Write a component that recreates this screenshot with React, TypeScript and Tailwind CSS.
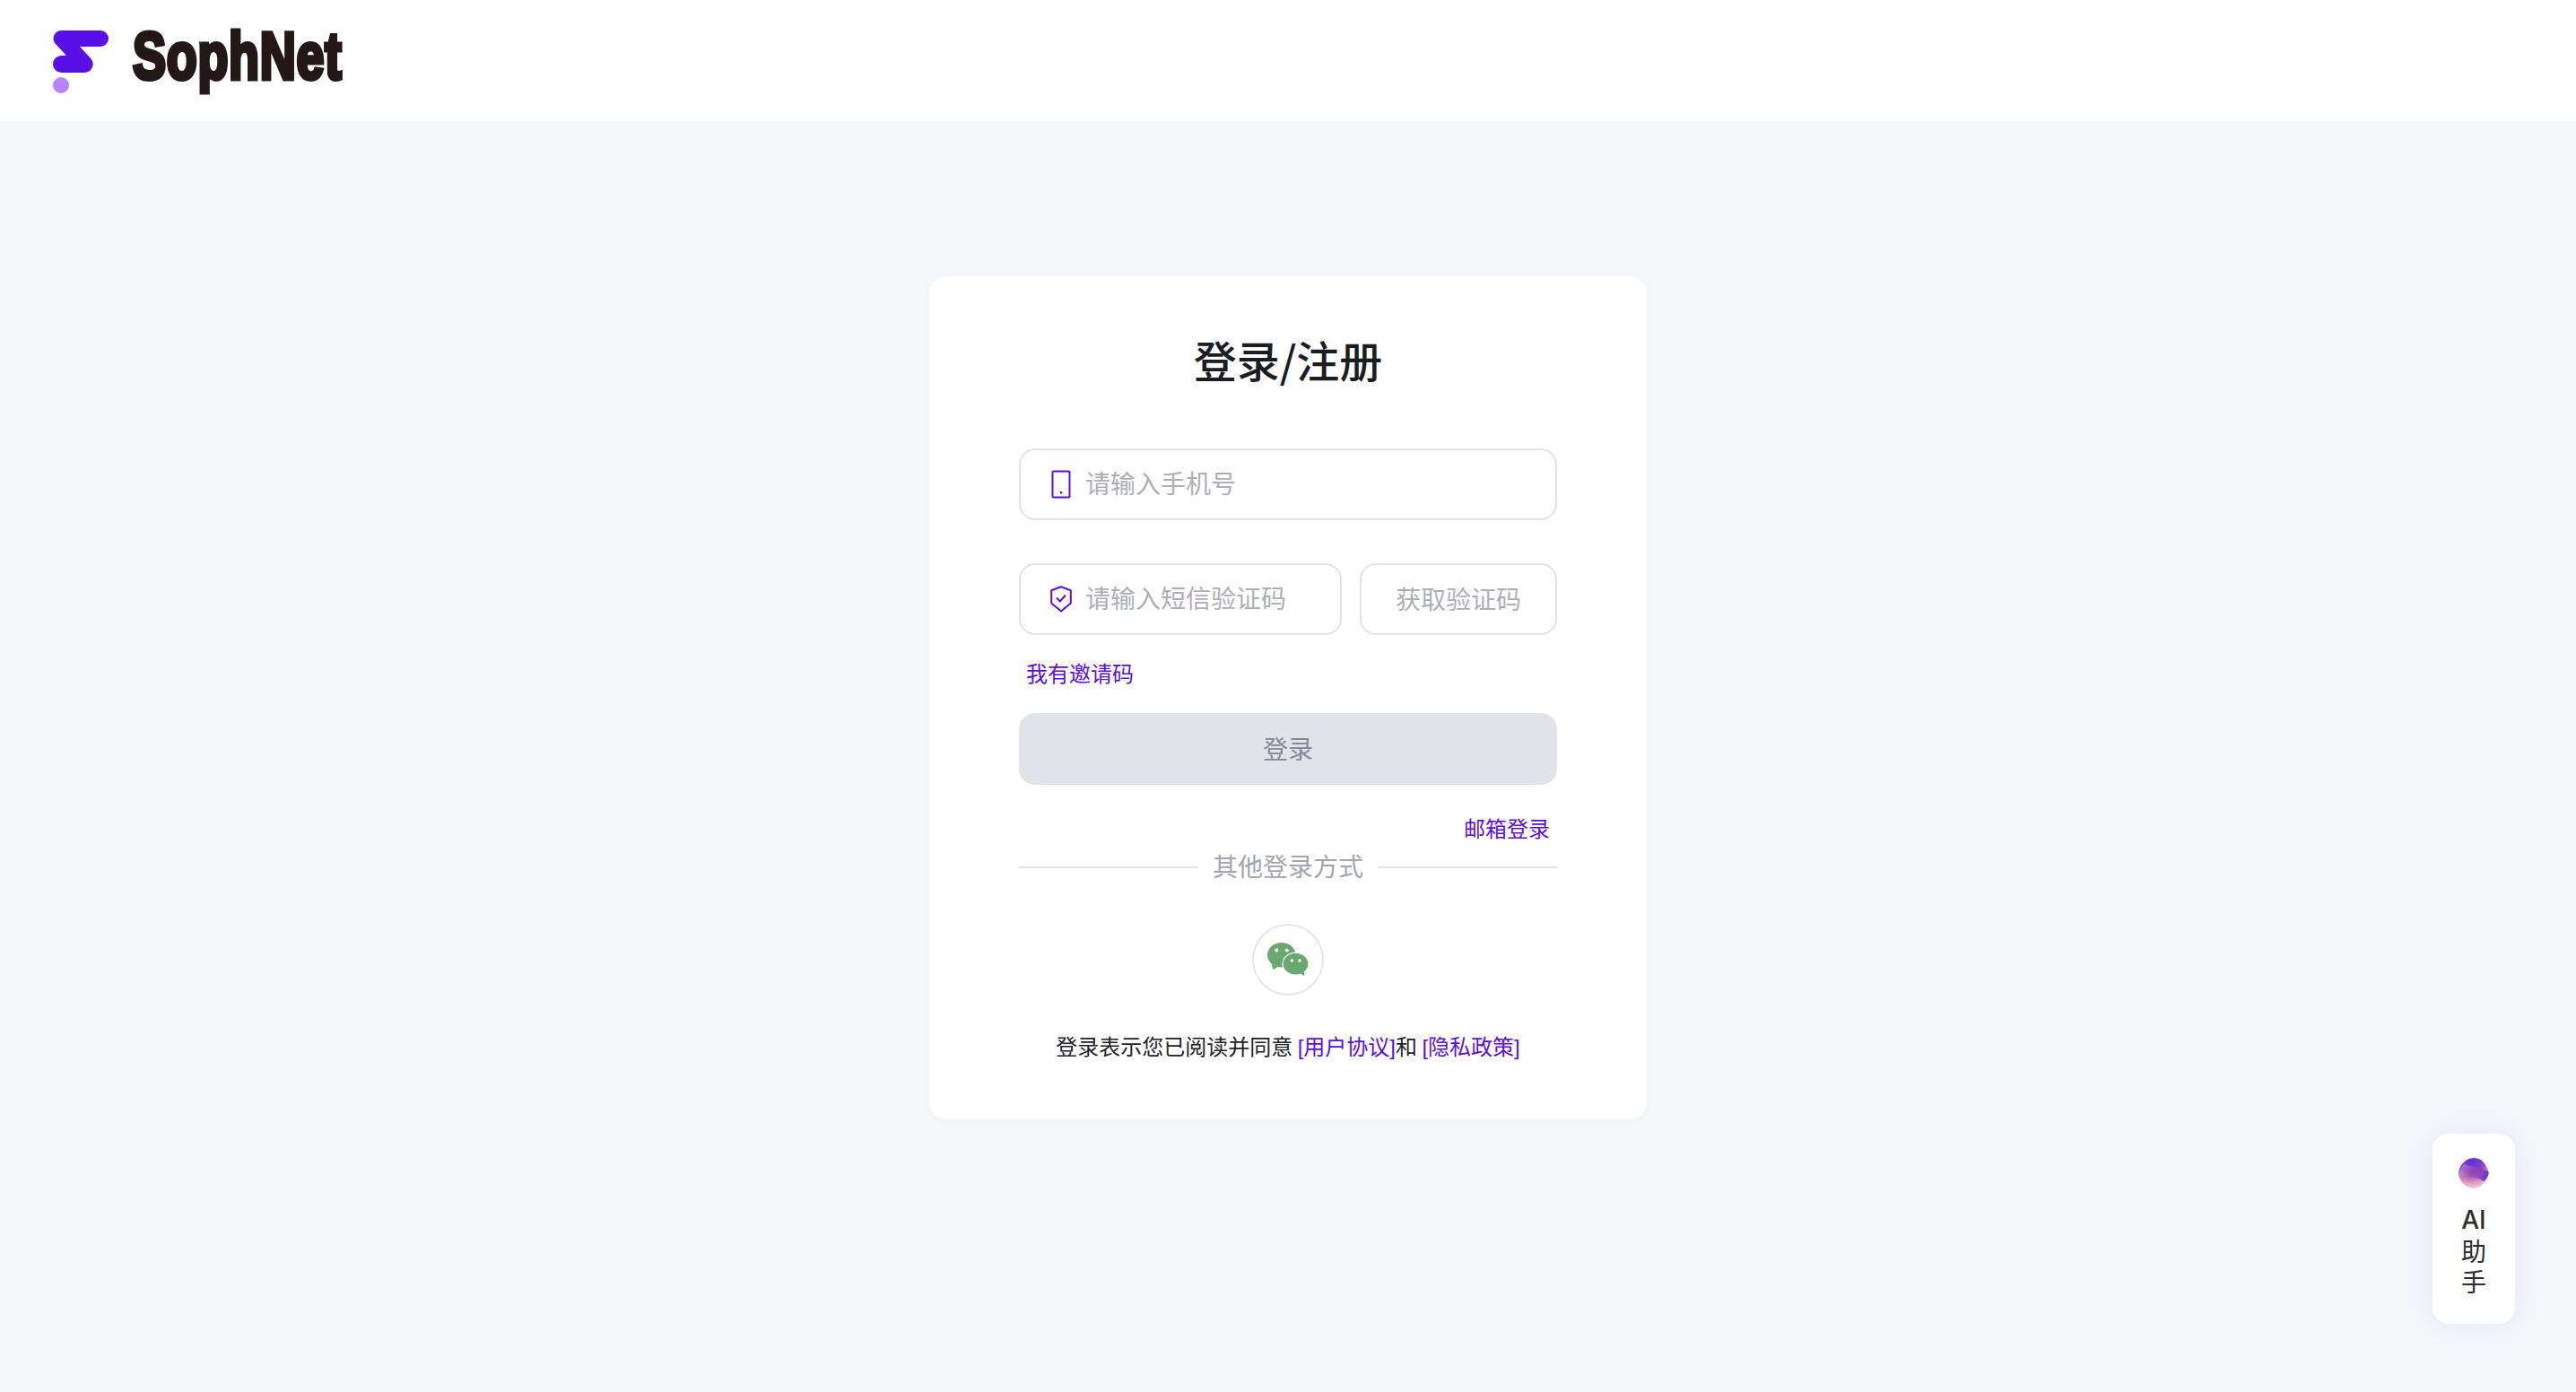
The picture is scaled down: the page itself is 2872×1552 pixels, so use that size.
import React from "react";

const cjk = "font-['Noto_Sans_CJK_SC','Noto_Sans',sans-serif]";
const bracket = "font-['Liberation_Sans','Noto_Sans_CJK_SC',sans-serif]";

function LogoMark() {
  return (
    <svg width="62" height="70" viewBox="0 0 62 70" className="shrink-0">
      <path d="M9 0H53A9 9 0 0 1 53 18H30L42 31A9.5 9.5 0 0 1 35 47H9.5A9.5 9.5 0 0 1 9.5 28H15L2.5 14.5A9 9 0 0 1 9 0Z" fill="#5a0fe6" />
      <circle cx="9" cy="61" r="9" fill="#b783fb" />
    </svg>
  );
}

function PhoneIcon() {
  return (
    <svg width="22" height="32" viewBox="0 0 22 32" className="ml-[1px] shrink-0">
      <rect x="1.5" y="1.5" width="19" height="29" rx="1" fill="none" stroke="#5a0fe6" strokeWidth="2" />
      <rect x="10" y="24" width="2.4" height="2.4" fill="#5a0fe6" />
    </svg>
  );
}

function ShieldIcon() {
  return (
    <svg width="24" height="30" viewBox="0 0 24 30" className="shrink-0">
      <path d="M12 1.2L22.8 5.2V19.5L12 28.6L1.2 19.5V5.2Z" fill="none" stroke="#5a0fe6" strokeWidth="2" strokeLinejoin="round" />
      <path d="M7 13.5L10.8 17.5L17 10.5" fill="none" stroke="#5a0fe6" strokeWidth="2" />
    </svg>
  );
}

function WechatIcon() {
  return (
    <svg width="46" height="38" viewBox="0 0 46 38">
      <ellipse cx="15.8" cy="13.8" rx="15.8" ry="13.8" fill="#6ba871" />
      <path d="M5 24L6 30L12 27Z" fill="#6ba871" />
      <ellipse cx="31.5" cy="23.7" rx="14.5" ry="12.5" fill="#6ba871" stroke="#ffffff" strokeWidth="1.2" />
      <path d="M36 34L41.5 37L40.5 31Z" fill="#6ba871" />
      <circle cx="10.3" cy="8.5" r="2" fill="#fff" />
      <circle cx="21.7" cy="8.5" r="2" fill="#fff" />
      <circle cx="27.3" cy="20" r="1.7" fill="#fff" />
      <circle cx="36" cy="20" r="1.7" fill="#fff" />
    </svg>
  );
}

function Orb() {
  return (
    <svg width="36" height="36" viewBox="0 0 36 36" className="blur-[0.4px]">
      <defs>
        <radialGradient id="orbA" cx="0.42" cy="0.1" r="1">
          <stop offset="0" stopColor="#5a2fd8" />
          <stop offset="0.4" stopColor="#8540c4" />
          <stop offset="0.68" stopColor="#d68fb4" />
          <stop offset="1" stopColor="#fdeeea" />
        </radialGradient>
        <linearGradient id="orbB" x1="0" y1="0" x2="1" y2="0.3">
          <stop offset="0" stopColor="#ffffff" stopOpacity="0.3" />
          <stop offset="0.5" stopColor="#b04a9c" stopOpacity="0.4" />
          <stop offset="1" stopColor="#5a2fd8" stopOpacity="0.9" />
        </linearGradient>
      </defs>
      <path d="M18 1C24 1 30 5 32 11C35 14 35 20 33 23C31 29 24 35 18 35C10 35 2 28 1 19C1 10 9 1 18 1Z" fill="url(#orbA)" />
      <path d="M7 8C15 10 26 11 35 17C34 22 32 25 29 27C21 22 12 21 3 21C2 16 4 11 7 8Z" fill="url(#orbB)" />
    </svg>
  );
}

function Field({ icon, placeholder, className }: { icon: React.ReactNode; placeholder: string; className: string }) {
  return (
    <label className={`flex h-[80px] items-center rounded-[18px] border-2 border-[#e3e4ea] bg-white ${className}`}>
      <span className="flex w-[72px] shrink-0 items-center pl-[33px]">{icon}</span>
      <input
        placeholder={placeholder}
        className={`min-w-0 flex-1 -translate-y-[2px] bg-transparent text-[28px] text-[#1f2329] outline-none placeholder:text-[#adafb6] ${cjk}`}
      />
    </label>
  );
}

export default function App() {
  return (
    <div className={`relative flex min-h-[1552px] flex-col bg-[#f6f7fb] ${cjk}`}>
      <header className="flex h-[135px] items-start bg-white pl-[59px] pt-[34px]">
        <LogoMark />
        <span className="ml-[27px] mt-[-16px] origin-left scale-x-[0.75] text-[74px] font-bold leading-[90px] tracking-[1px] text-[#231815] [-webkit-text-stroke:5px_#231815] font-['Liberation_Sans',sans-serif]">
          SophNet
        </span>
      </header>

      <main className="flex flex-1 justify-center pt-[173px]">
        <section className="h-[940px] w-[800px] rounded-[18px] bg-white px-[100px] pt-[60px] shadow-[0_2px_12px_rgba(30,30,80,0.03)]">
          <h1 className="text-center text-[48px] font-medium leading-[64px] text-[#1a1d24]">登录/注册</h1>

          <Field icon={<PhoneIcon />} placeholder="请输入手机号" className="mt-[68px] w-full" />

          <div className="mt-[48px] flex gap-[20px]">
            <Field icon={<ShieldIcon />} placeholder="请输入短信验证码" className="w-[360px]" />
            <button className="h-[80px] flex-1 rounded-[18px] border-2 border-[#e3e4ea] bg-white pb-[3px] text-[28px] text-[#adafb6]">
              获取验证码
            </button>
          </div>

          <div className="mt-[26px] pl-[8px] text-[24px] leading-[32px] text-[#5a0fe6]">我有邀请码</div>

          <button className="mt-[29px] h-[80px] w-full rounded-[18px] bg-[#e2e3e8] pb-[3px] text-[28px] text-[#858a96]">登录</button>

          <div className="mt-[32px] pr-[8px] text-right text-[24px] leading-[32px] text-[#5a0fe6]">邮箱登录</div>

          <div className="mt-[8px] flex items-center gap-[16px]">
            <div className="h-[2px] flex-1 bg-[#e3e4ea]" />
            <span className="-translate-y-[2px] text-[28px] leading-[40px] text-[#a3a6b0]">其他登录方式</span>
            <div className="h-[2px] flex-1 bg-[#e3e4ea]" />
          </div>

          <div className="mt-[43px] flex justify-center">
            <div className="flex h-[80px] w-[80px] items-center justify-center rounded-full border-2 border-[#e6e6ec]">
              <WechatIcon />
            </div>
          </div>

          <p className="mt-[40px] whitespace-nowrap text-center text-[24px] leading-[32px] text-[#1f2329]">
            登录表示您已阅读并同意 <span className="text-[#5a0fe6]"><span className={bracket}>[</span>用户协议<span className={bracket}>]</span></span>和 <span className="text-[#5a0fe6]"><span className={bracket}>[</span>隐私政策<span className={bracket}>]</span></span>
          </p>
        </section>
      </main>

      <aside className="absolute left-[2712px] top-[1264px] flex h-[212px] w-[92px] flex-col items-center rounded-[18px] bg-white pt-[26px] shadow-[0_0_32px_rgba(90,50,230,0.10)]">
        <Orb />
        <div className="mt-[17px] flex flex-col items-center text-[28px] leading-[34px] text-[#2e2e2e]">
          <span className="font-medium font-['Inter',sans-serif]">AI</span>
          <span>助</span>
          <span>手</span>
        </div>
      </aside>
    </div>
  );
}
